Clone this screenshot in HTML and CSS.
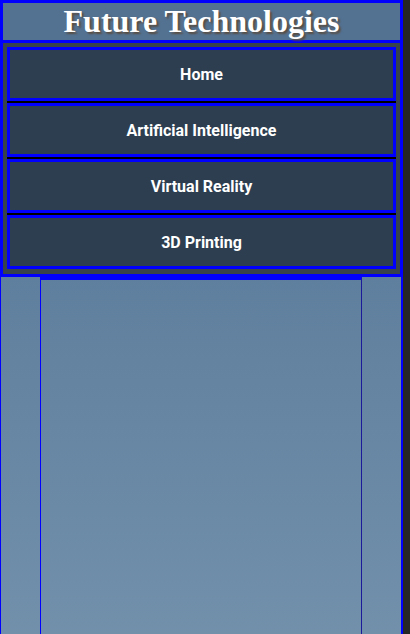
FILE: index.html
```html
<!DOCTYPE html>
<html lang="en">
<head>
<meta charset="utf-8">
<title>Future Technologies</title>
<link rel="stylesheet" href="styles.css">
</head>
<body>
<div class="page">
  <header class="site-header">
    <h1 class="site-title">Future Technologies</h1>
  </header>
  <nav class="site-nav">
    <ul class="nav-list">
      <li class="nav-item"><a class="nav-link" href="#">Home</a></li>
      <li class="nav-item"><a class="nav-link" href="#">Artificial Intelligence</a></li>
      <li class="nav-item"><a class="nav-link" href="#">Virtual Reality</a></li>
      <li class="nav-item"><a class="nav-link" href="#">3D Printing</a></li>
    </ul>
  </nav>
  <div class="content">
    <aside class="side side-left"></aside>
    <main class="main"></main>
    <aside class="side side-right"></aside>
  </div>
</div>
</body>
</html>
```

FILE: styles.css
```css
html, body {
  margin: 0;
  padding: 0;
}
body {
  background: #262626;
  font-family: Roboto, "Liberation Sans", sans-serif;
}
.page {
  width: 403px;
}
.site-header {
  background: #537292;
  border: 3px solid #0000ff;
  height: 37px;
  display: flex;
  align-items: center;
  justify-content: center;
}
.site-title {
  margin: 0;
  font-family: "Liberation Serif", "Times New Roman", serif;
  font-size: 32px;
  font-weight: bold;
  line-height: 37px;
  color: #ffffff;
  text-shadow: 2px 2px 2px rgba(90, 70, 50, 0.85);
}
.site-nav {
  background: #37424d;
  border: 3px solid #0000ff;
  border-top: 0;
  padding: 4px 4px 5px 4px;
}
.nav-list {
  list-style: none;
  margin: 0;
  padding: 0;
  display: flex;
  flex-direction: column;
  gap: 2px;
}
.nav-item {
  border: 3px solid #0000ff;
  background: #2c3e50;
}
.nav-item:not(:last-child) {
  box-shadow: 0 2px 0 #000000;
}
.nav-link {
  display: flex;
  align-items: center;
  justify-content: center;
  height: 48px;
  color: #ffffff;
  font-weight: bold;
  font-size: 16px;
  text-decoration: none;
}
.content {
  display: flex;
  border-left: 1px solid #0000ff;
  border-right: 2px solid #0000ff;
  min-height: 380px;
  background: linear-gradient(180deg, #5f7f9e 0%, #7391ab 100%);
}
.side {
  width: 39px;
  flex: none;
}
.main {
  flex: 1;
  border-top: 3px solid #0000ff;
  border-left: 1px solid #0000ff;
  border-right: 1px solid #1a1a9a;
}
```
